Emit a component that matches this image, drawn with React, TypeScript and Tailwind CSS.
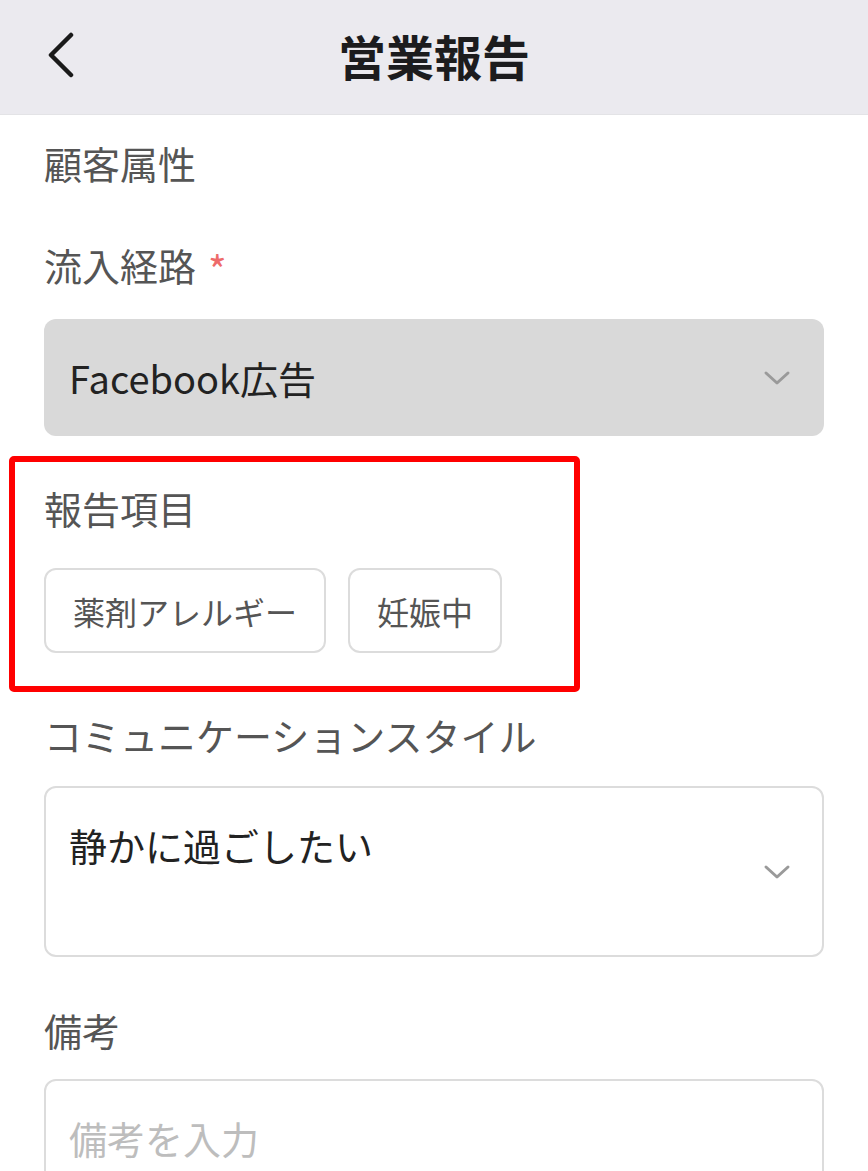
import React from 'react';

const jp = { fontFamily: '"Noto Sans CJK JP", "Noto Sans", sans-serif' };

const Chevron: React.FC = () => (
  <svg width="28" height="18" viewBox="0 0 28 18" className="shrink-0">
    <path d="M3 4 L14 14 L25 4" fill="none" stroke="#9a9a9a" strokeWidth="3" strokeLinecap="round" strokeLinejoin="round" />
  </svg>
);

const Label: React.FC<{ children: React.ReactNode }> = ({ children }) => (
  <div className="text-[38px] leading-[38px] text-[#555555]">{children}</div>
);

export default function App() {
  const tags = ['薬剤アレルギー', '妊娠中'];
  return (
    <div className="w-[868px] h-[1171px] overflow-hidden bg-white" style={jp}>
      <header className="h-[115px] bg-[#ebeaef] flex items-center relative border-b border-[#e3e3e6]">
        <div className="absolute left-[46px] top-[32px]">
          <svg width="30" height="46" viewBox="0 0 30 46">
            <path d="M25 3 L5 23 L25 43" fill="none" stroke="#1a1a1a" strokeWidth="4.5" strokeLinecap="round" strokeLinejoin="round" />
          </svg>
        </div>
        <h1 className="w-full text-center text-[48px] leading-[48px] font-bold text-[#1c1c1e] -mt-[4px]">営業報告</h1>
      </header>

      <main className="px-[44px]">
        <div className="mt-[29px]">
          <Label>顧客属性</Label>
        </div>

        <div className="mt-[64px] h-[38px] flex items-center gap-[12px]">
          <Label>流入経路</Label>
          <span className="text-[40px] leading-[38px] h-[38px] text-[#ee6b6b] pt-[4px]">*</span>
        </div>

        <div className="mt-[35px] h-[117px] rounded-[12px] bg-[#d9d9d9] flex items-center justify-between pl-[25px] pr-[33px]">
          <span className="text-[38px] leading-[38px] text-[#222222]">Facebook広告</span>
          <Chevron />
        </div>

        <section className="relative mt-[53px]">
          <div className="absolute -left-[35px] -top-[33px] w-[571px] h-[236px] border-[6px] border-[#ff0000] rounded-[5px] pointer-events-none" />
          <Label>報告項目</Label>
          <div className="mt-[41px] flex gap-[22px]">
            {tags.map((t) => (
              <div
                key={t}
                className="h-[85px] px-[27px] flex items-center rounded-[12px] border-2 border-[#dcdcdc] text-[32px] leading-[32px] text-[#555555]"
              >
                {t}
              </div>
            ))}
          </div>
        </section>

        <div className="mt-[63px]">
          <Label>コミュニケーションスタイル</Label>
        </div>

        <div className="mt-[32px] h-[171px] rounded-[12px] border-2 border-[#dcdcdc] flex justify-between pl-[23px] pr-[31px]">
          <span className="pt-[38px] text-[38px] leading-[38px] text-[#222222]">静かに過ごしたい</span>
          <div className="self-center">
            <Chevron />
          </div>
        </div>

        <div className="mt-[54px]">
          <Label>備考</Label>
        </div>

        <div className="mt-[30px] h-[160px] rounded-[12px] border-2 border-[#dcdcdc] pl-[23px] pt-[38px]">
          <span className="text-[38px] leading-[38px] text-[#bdbdbd]">備考を入力</span>
        </div>
      </main>
    </div>
  );
}
